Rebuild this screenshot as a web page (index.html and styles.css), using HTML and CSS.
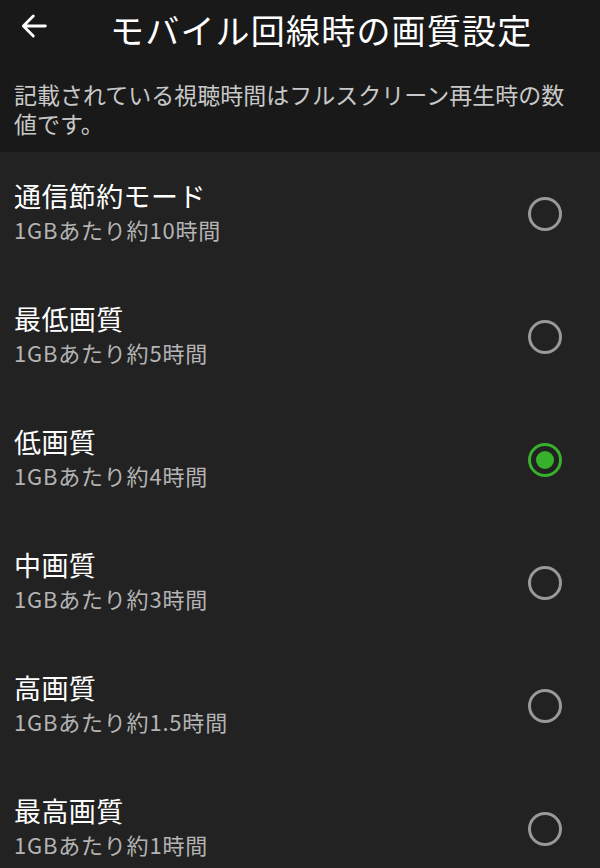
FILE: index.html
```html
<!DOCTYPE html>
<html lang="ja">

<head>
    <meta charset="UTF-8">
    <meta name="viewport" content="width=device-width, initial-scale=1.0">
    <title>モバイル回線時の画質設定</title>
    <link rel="stylesheet" href="styles.css">
</head>

<body>
    <header class="top">
        <div class="toolbar">
            <svg class="back" viewBox="0 0 24 24" width="34" height="34">
                <path d="M20 12H5M11.5 5L4.5 12l7 7" fill="none" stroke="#fff" stroke-width="2" stroke-linecap="round" stroke-linejoin="round"/>
            </svg>
            <h1 class="title">モバイル回線時の画質設定</h1>
        </div>
        <p class="note">記載されている視聴時間はフルスクリーン再生時の数値です。</p>
    </header>

    <ul class="options">
        <li class="option">
            <div class="label">
                <span class="name">通信節約モード</span>
                <span class="sub">1GBあたり約10時間</span>
            </div>
            <span class="radio"></span>
        </li>
        <li class="option">
            <div class="label">
                <span class="name">最低画質</span>
                <span class="sub">1GBあたり約5時間</span>
            </div>
            <span class="radio"></span>
        </li>
        <li class="option">
            <div class="label">
                <span class="name">低画質</span>
                <span class="sub">1GBあたり約4時間</span>
            </div>
            <span class="radio checked"></span>
        </li>
        <li class="option">
            <div class="label">
                <span class="name">中画質</span>
                <span class="sub">1GBあたり約3時間</span>
            </div>
            <span class="radio"></span>
        </li>
        <li class="option">
            <div class="label">
                <span class="name">高画質</span>
                <span class="sub">1GBあたり約1.5時間</span>
            </div>
            <span class="radio"></span>
        </li>
        <li class="option">
            <div class="label">
                <span class="name">最高画質</span>
                <span class="sub">1GBあたり約1時間</span>
            </div>
            <span class="radio"></span>
        </li>
    </ul>
</body>

</html>
```

FILE: styles.css
```css
body {
    margin: 0;
    padding: 0;
    background: #222222;
    color: #fff;
    font-family: "Noto Sans CJK JP", "Noto Sans", sans-serif;
    height: 868px;
    overflow: hidden;
}

.top {
    background: #191919;
    height: 152px;
    box-sizing: border-box;
}

.toolbar {
    height: 60px;
    display: flex;
    align-items: center;
    padding-left: 17px;
}

.back {
    flex: none;
    margin-top: -8px;
}

.title {
    margin: 0 0 0 59px;
    font-size: 34px;
    font-weight: 400;
    line-height: 40px;
    letter-spacing: 1.2px;
}

.note {
    margin: 20px 0 0;
    padding: 0 14px;
    font-size: 23px;
    line-height: 29px;
    color: #c8c8c8;
}

.options {
    list-style: none;
    margin: 0;
    padding: 0;
}

.option {
    height: 123px;
    display: flex;
    align-items: center;
    justify-content: space-between;
    padding: 0 38px 0 14px;
}

.label {
    display: flex;
    flex-direction: column;
    margin-top: -4px;
}

.name {
    font-size: 27px;
    line-height: 34px;
    letter-spacing: 0.4px;
    color: #fff;
}

.sub {
    font-size: 22px;
    line-height: 32px;
    letter-spacing: 0.8px;
    color: #b4b4b4;
}

.radio {
    width: 28px;
    height: 28px;
    border: 3px solid #999;
    border-radius: 50%;
    position: relative;
    flex: none;
}

.radio.checked {
    border-color: #37b02c;
}

.radio.checked::after {
    content: "";
    position: absolute;
    left: 5px;
    top: 5px;
    width: 18px;
    height: 18px;
    border-radius: 50%;
    background: #37b02c;
}
```
